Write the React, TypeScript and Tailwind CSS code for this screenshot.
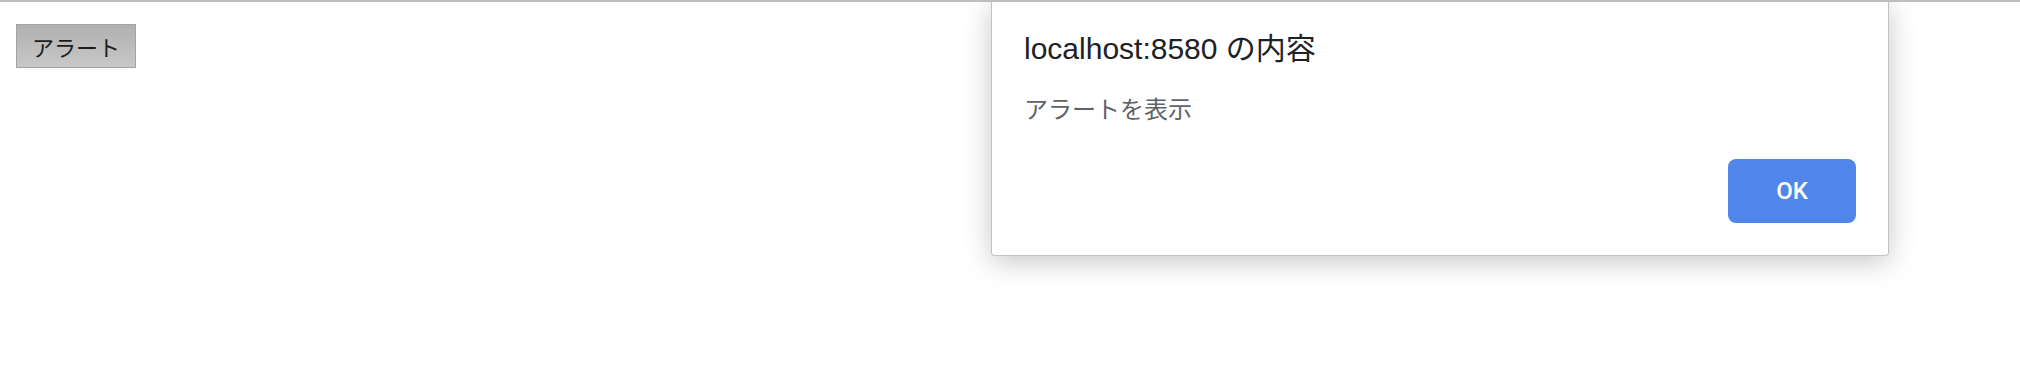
export default function App() {
  return (
    <main className="relative w-[2020px] h-[374px] bg-white border-t-2 border-[#bdbdbd] overflow-hidden">
      {/* page button */}
      <div className="pl-4 pt-[22px]">
        <button className="w-[120px] h-[44px] flex items-center justify-center border border-[#a3a3a3] bg-gradient-to-b from-[#b0b0b0] to-[#c8c8c8] text-[22px] text-[#1c1c1c] font-['Noto_Sans_CJK_JP',sans-serif] leading-none">
          アラート
        </button>
      </div>

      {/* alert dialog */}
      <div className="absolute left-[991px] top-[-2px] w-[898px] h-[256px] bg-white border-x border-b border-[#c2c2c2] rounded-b-[4px] shadow-[0_6px_28px_rgba(0,0,0,0.22)] flex flex-col px-8 pt-[31px] pb-8">
        <h1 className="text-[30px] leading-[36px] text-[#202124] font-['Liberation_Sans','Noto_Sans_CJK_JP',sans-serif]">
          localhost:8580 の内容
        </h1>
        <p className="mt-[25px] text-[24px] leading-[32px] text-[#5f6368] font-['Noto_Sans_CJK_JP',sans-serif]">
          アラートを表示
        </p>
        <div className="mt-auto flex justify-end">
          <button className="w-[128px] h-[64px] rounded-[8px] bg-[#5086ea] text-white text-[24px] font-medium font-['Roboto',sans-serif]">
            OK
          </button>
        </div>
      </div>
    </main>
  );
}
